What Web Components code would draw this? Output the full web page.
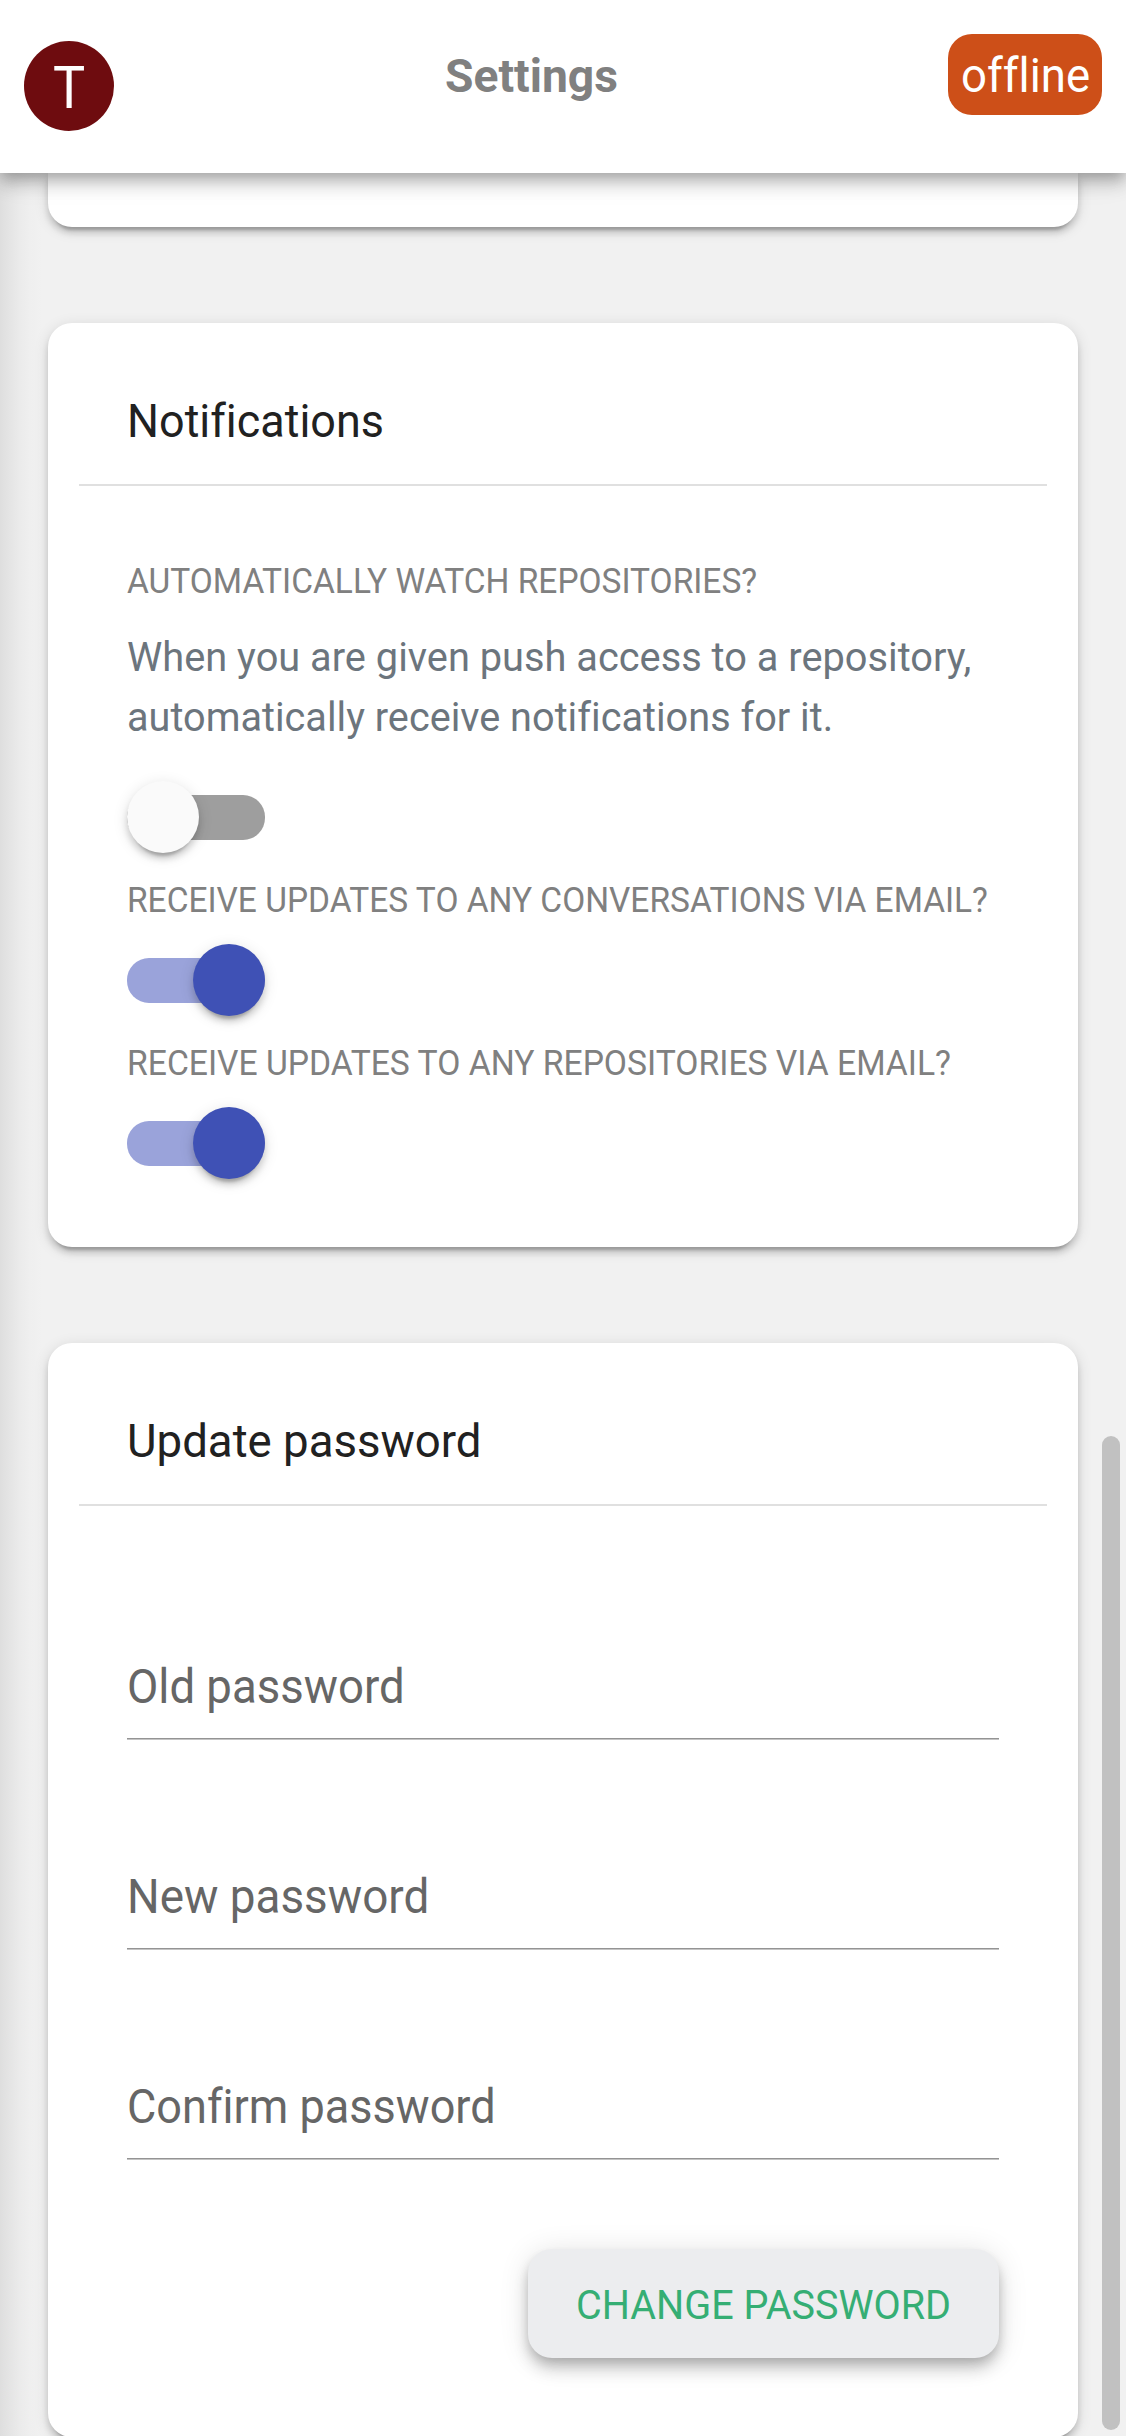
<!DOCTYPE html>
<html lang="en">
<head>
<meta charset="utf-8">
<title>Settings</title>
<style>
  html, body { margin: 0; height: 2436px; overflow: hidden; }
  body { font-family: Roboto, "Open Sans", sans-serif; font-variant-ligatures: none; background: #fff; color: #212121; }
</style>
</head>
<body>
<settings-page>
  <app-header slot="header">
    <user-avatar><fit-line width="32">T</fit-line></user-avatar>
    <fit-line class="title" width="173">Settings</fit-line>
    <status-badge><fit-line width="129">offline</fit-line></status-badge>
  </app-header>

  <settings-card class="previous"></settings-card>

  <settings-card>
    <fit-line slot="title" width="257">Notifications</fit-line>
    <setting-label><fit-line width="630">AUTOMATICALLY WATCH REPOSITORIES?</fit-line></setting-label>
    <setting-hint>
      <fit-line width="844">When you are given push access to a repository,</fit-line>
      <fit-line width="706">automatically receive notifications for it.</fit-line>
    </setting-hint>
    <toggle-switch style="margin-top:34px"></toggle-switch>
    <setting-label class="next"><fit-line width="861">RECEIVE UPDATES TO ANY CONVERSATIONS VIA EMAIL?</fit-line></setting-label>
    <toggle-switch checked></toggle-switch>
    <setting-label class="next"><fit-line width="824">RECEIVE UPDATES TO ANY REPOSITORIES VIA EMAIL?</fit-line></setting-label>
    <toggle-switch checked></toggle-switch>
  </settings-card>

  <settings-card class="form">
    <fit-line slot="title" width="355">Update password</fit-line>
    <text-field><fit-line width="278">Old password</fit-line></text-field>
    <text-field><fit-line width="302">New password</fit-line></text-field>
    <text-field><fit-line width="369">Confirm password</fit-line></text-field>
    <action-button><fit-line width="375">CHANGE PASSWORD</fit-line></action-button>
  </settings-card>
</settings-page>

<script>
  const define = (name, html, setup) => {
    const template = document.createElement('template');
    template.innerHTML = html;
    customElements.define(name, class extends HTMLElement {
      constructor() {
        super();
        this.attachShadow({ mode: 'open' }).append(template.content.cloneNode(true));
      }
      connectedCallback() { if (setup) setup(this, this.shadowRoot); }
    });
  };

  define('settings-page', `
    <style>
      :host { display: flex; flex-direction: column; position: relative; width: 1126px; height: 2436px; overflow: hidden; }
      ::slotted(app-header) { z-index: 2; }
      main {
        flex: 1; display: flex; flex-direction: column; gap: 96px; padding: 0 48px;
        background: linear-gradient(90deg, #dedede 0, #e4e4e4 9px, #ebebeb 20px, #efefef 30px, #f1f1f1 42px) no-repeat #f1f1f1;
      }
      .thumb { position: absolute; top: 1436px; right: 6px; width: 18px; height: 994px; border-radius: 9px; background: #c1c1c1; }
    </style>
    <slot name="header"></slot>
    <main><slot></slot></main>
    <div class="thumb"></div>`);

  define('app-header', `
    <style>
      :host {
        display: flex; flex: none; position: relative; box-sizing: border-box; height: 173px; padding: 0 24px;
        justify-content: space-between; align-items: flex-start; background: #fff;
        box-shadow: 0 6px 12px -3px rgba(0,0,0,.2), 0 12px 15px 0 rgba(0,0,0,.14), 0 3px 30px 0 rgba(0,0,0,.12);
      }
      ::slotted(.title) { margin-top: 46px; font-size: 47px; line-height: 60px; font-weight: 700; color: #808080; }
    </style>
    <slot></slot>`);

  define('user-avatar', `
    <style>
      :host {
        display: flex; justify-content: center; box-sizing: border-box; width: 90px; height: 90px; margin-top: 41px; padding-top: 2px;
        border-radius: 50%; background: #6e0c0f; color: #fff; font-size: 59px; line-height: 90px;
      }
    </style>
    <slot></slot>`);

  define('status-badge', `
    <style>
      :host {
        display: flex; justify-content: center; box-sizing: border-box; width: 154px; height: 81px; margin-top: 34px; padding-top: 1px;
        border-radius: 24px; background: #cd4f18; color: #fff; font-size: 48px; line-height: 81px;
      }
    </style>
    <slot></slot>`);

  define('settings-card', `
    <style>
      :host {
        display: block; flex: none; box-sizing: border-box; padding: 62px 31px 68px; border-radius: 24px; background: #fff;
        box-shadow: 0 9px 3px -6px rgba(0,0,0,.2), 0 6px 6px 0 rgba(0,0,0,.14), 0 3px 15px 0 rgba(0,0,0,.12);
      }
      :host(.previous) { height: 54px; padding: 0; border-radius: 0 0 24px 24px; }
      :host(.previous) header, :host(.previous) section { display: none; }
      :host(.form) { padding-bottom: 79px; }
      header { padding: 0 48px 27px; border-bottom: 2px solid #e0e0e0; font-size: 47px; line-height: 72px; }
      section { display: flex; flex-direction: column; align-items: flex-start; padding: 68px 48px 0; }
      :host(.form) section { align-items: stretch; gap: 127px; padding-top: 151px; }
    </style>
    <header><slot name="title"></slot></header>
    <section><slot></slot></section>`);

  define('setting-label', `
    <style>
      :host { display: block; font-size: 35.3px; line-height: 54px; color: #808080; }
      :host(.next) { margin: 20px 0 17px; }
    </style>
    <slot></slot>`);

  define('setting-hint', `
    <style>
      :host { display: flex; flex-direction: column; margin-top: 19px; font-size: 41px; line-height: 60px; color: #6c757d; }
    </style>
    <slot></slot>`);

  define('toggle-switch', `
    <style>
      :host { display: flex; align-items: center; width: 138px; height: 72px; }
      .track { display: flex; align-items: center; width: 138px; height: 45px; border-radius: 22px; background: #9e9e9e; }
      .knob {
        flex: none; width: 72px; height: 72px; border-radius: 50%; background: #fafafa;
        box-shadow: 0 9px 3px -6px rgba(0,0,0,.2), 0 6px 6px 0 rgba(0,0,0,.14), 0 3px 15px 0 rgba(0,0,0,.12);
      }
      :host([checked]) .track { justify-content: flex-end; background: #9aa3da; }
      :host([checked]) .knob { background: #3f51b5; }
    </style>
    <div class="track"><div class="knob"></div></div>`);

  define('text-field', `
    <style>
      :host {
        display: block; box-sizing: border-box; height: 83px; font-size: 47.5px; line-height: 60px; color: #666;
        background: linear-gradient(#949494 0 1px, #c4c4c4 1px 2px) bottom / 100% 2px no-repeat;
      }
    </style>
    <slot></slot>`);

  define('action-button', `
    <style>
      :host {
        display: flex; align-self: flex-end; justify-content: center; width: 471px; height: 109px; margin-top: -38px;
        border-radius: 24px; background: #ecedef; color: #35ae74; font-size: 41px; line-height: 113px;
        box-shadow: 0 6px 12px -3px rgba(0,0,0,.2), 0 12px 15px 0 rgba(0,0,0,.14), 0 3px 30px 0 rgba(0,0,0,.12);
      }
    </style>
    <slot></slot>`);

  // One line of text, condensed or widened horizontally to the given width.
  define('fit-line', `
    <style>
      :host { display: block; white-space: nowrap; }
      span { display: inline-block; transform-origin: 0 50%; vertical-align: top; }
    </style>
    <span><slot></slot></span>`, (host, root) => {
      const width = Number(host.getAttribute('width'));
      const span = root.querySelector('span');
      host.style.width = width + 'px';
      span.style.transform = 'scaleX(' + width / span.offsetWidth + ')';
    });
</script>
</body>
</html>
